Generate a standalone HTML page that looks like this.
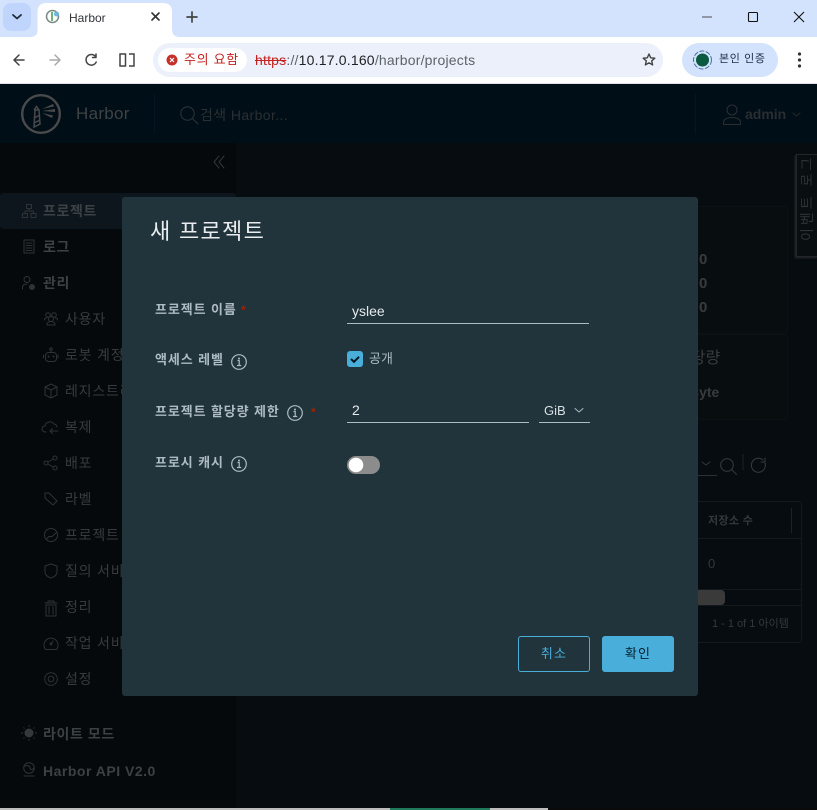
<!DOCTYPE html>
<html lang="ko"><head><meta charset="utf-8"><title>Harbor</title>
<style>
html,body{margin:0;padding:0;width:817px;height:810px;overflow:hidden;background:#fff}
body{position:relative;font-family:"Liberation Sans","Noto Sans CJK KR",sans-serif}
.a{position:absolute;white-space:nowrap}
svg{position:absolute;overflow:visible}
.s{fill:none;stroke-linecap:round;stroke-linejoin:round}
.nav{color:#363b3e;font-size:14px;line-height:20px;letter-spacing:.8px;margin-top:1px}
.navb{font-weight:bold;color:#3c4144;letter-spacing:.6px}
.lab{color:#adbbc4;font-size:13px;font-weight:bold;line-height:18px;letter-spacing:.9px}
.line{position:absolute;height:1px;background:#adbbc4}
.ic{stroke:#2e3336;stroke-width:1}
</style></head><body>
<!-- browser chrome -->
<div class="a" style="left:0;top:0;width:817px;height:37px;background:#d3e3fd"></div>
<div class="a" style="left:0;top:37px;width:817px;height:46px;background:#fff"></div>
<div class="a" style="left:3px;top:3px;width:28px;height:28px;border-radius:8px;background:#bfd5fb"></div>
<div class="a" style="left:153px;top:43px;width:510px;height:34px;border-radius:17px;background:#ebf0fa"></div>
<div class="a" style="left:158px;top:48px;width:89px;height:24px;border-radius:12px;background:#fff"></div>
<div class="a" style="left:682px;top:43px;width:96px;height:34px;border-radius:17px;background:#d3e3fd"></div>
<svg style="left:0;top:0" width="817" height="84">
<path class="s" d="M13 15l4 3.500 4-3.500" stroke="#1f2937" stroke-width="1.800"/>
<path d="M30 37C36 37 37.500 34 37.500 30V12Q37.500 3 46.500 3H163Q172 3 172 12V28C172 34 174 37 180 37Z" fill="#fff"/>
<circle cx="52.500" cy="16.500" r="6" fill="none" stroke="#7a8a80" stroke-width="1.500"/>
<path d="M52 12v9" stroke="#3a9a4a" stroke-width="1.500"/><circle cx="56.500" cy="14" r="2.500" fill="#6bb6e0"/>
<path class="s" d="M152 13l7 7M159 13l-7 7" stroke="#333" stroke-width="1.600"/>
<path class="s" d="M192 12v10M187 17h10" stroke="#444" stroke-width="1.700"/>
<path d="M702 17h10" stroke="#6b6f78" stroke-width="1.300"/>
<rect x="748.500" y="12.500" width="9" height="9" rx="1" fill="none" stroke="#111" stroke-width="1.100"/>
<path d="M794 12l10 10M804 12l-10 10" stroke="#111" stroke-width="1.100"/>
<path class="s" d="M24 60H14M19 55l-5 5 5 5" stroke="#444" stroke-width="1.500" fill="none"/>
<path class="s" d="M60 60H50M55 55l5 5-5 5" stroke="#aaa" stroke-width="1.500" fill="none"/>
<path class="s" d="M95.500 56.500A5.300 5.300 0 1 0 96.200 62M96 54v3.500h-3.500" stroke="#444" stroke-width="1.500" fill="none"/>
<path d="M125.500 54h-5.500v12h5.500zM129 54h5v12h-5" fill="none" stroke="#444" stroke-width="1.500"/>
<circle cx="172" cy="60" r="5.500" fill="#c5302a"/>
<path d="M170 58l4 4M174 58l-4 4" stroke="#fff" stroke-width="1.200"/>
<path d="M649 54l1.700 3.800 4.100.4-3.100 2.700.9 4-3.600-2.100-3.600 2.100.9-4-3.100-2.700 4.100-.4z" fill="none" stroke="#444" stroke-width="1.400" stroke-linejoin="round"/>
<circle cx="799.500" cy="54" r="1.600" fill="#333"/><circle cx="799.500" cy="60" r="1.600" fill="#333"/><circle cx="799.500" cy="66" r="1.600" fill="#333"/>
<circle cx="702.500" cy="60" r="9" fill="none" stroke="#4a6fa5" stroke-width="1" stroke-dasharray="5 1.500"/><circle cx="702.500" cy="60" r="6.500" fill="#0a5a42"/>
</svg>
<div class="a" style="left:69px;top:10px;font-size:12px;line-height:17px;color:#303338">Harbor</div>
<div class="a" style="left:184px;top:51px;font-size:13px;line-height:17px;letter-spacing:.7px;color:#c5221f">주의 요함</div>
<div class="a" style="left:255px;top:51px;font-size:14px;line-height:18px;letter-spacing:.2px;color:#5f6368"><span style="color:#c5221f;text-decoration:line-through">https</span>://<span style="color:#202124">10.17.0.160</span>/harbor/projects</div>
<div class="a" style="left:719px;top:51px;font-size:11px;line-height:17px;letter-spacing:.6px;color:#1f2a44">본인 인증</div>
<div class="a" style="left:0;top:83px;width:817px;height:1px;background:#dfe1e5"></div>
<!-- app -->
<div class="a" style="left:0;top:84px;width:817px;height:726px;background:#070c10"></div>
<div class="a" style="left:0;top:84px;width:817px;height:59px;background:#000e17"></div>
<div class="a" style="left:0;top:143px;width:236px;height:665px;background:#05090c"></div>
<div class="a" style="left:0;top:193px;width:236px;height:36px;border-radius:3px;background:#0d161c"></div>
<div class="a" style="left:154px;top:94px;width:1px;height:40px;background:#061620"></div>
<div class="a" style="left:695px;top:94px;width:1px;height:40px;background:#061620"></div>
<svg style="left:0;top:0" width="817" height="810">
<circle cx="41" cy="114" r="18.800" fill="none" stroke="#4a4a4a" stroke-width="2.400"/>
<path d="M34 127l1-17h4l1 14zM34 110l2.500-3.500 2.500 3.500" fill="none" stroke="#4a4a4a" stroke-width="1.500"/>
<path d="M34 118l6-3M34 123l6-3" stroke="#4a4a4a" stroke-width="1.500"/>
<path d="M42 109l11-5 1 2.500zM42 111l13 1v-3zM42 113l10 5 1-2.500z" fill="#4a4a4a"/>
<g class="s" stroke="#2c3236" stroke-width="1.100"><circle cx="187.500" cy="113.500" r="6.700"/><path d="M192.500 118.500l5.500 5.500"/></g>
<g class="s" stroke="#2a2e31" stroke-width="1.100"><circle cx="732" cy="110" r="5"/><path d="M723.500 124.500v-2c0-3 3-5 8.500-5s8.500 2 8.500 5v2z"/></g>
<path class="s" d="M793 113l3.500 3 3.500-3" stroke="#26292b" stroke-width="1"/>
<path class="s" d="M219 156l-5 6 5 6M224 156l-5 6 5 6" stroke="#2f373b" stroke-width="1"/>
<!-- nav icons -->
<g class="s ic">
<rect x="26.500" y="204.500" width="5" height="4"/><rect x="22.500" y="213.500" width="5" height="4"/><rect x="31" y="213.500" width="5" height="4"/><path d="M29 208.500v2.500M25 213.500v-2.500h8.500v2.500"/>
<rect x="24" y="240" width="10" height="13"/><path d="M26 243h6M26 245.500h6M26 248h6M26 250.500h6"/>
<circle cx="27" cy="279.500" r="3"/><path d="M22.500 289v-1.500c0-2.500 2-3.500 4.500-3.500"/><circle cx="32" cy="287" r="2.500" fill="#2e3336"/>
<circle cx="48" cy="315" r="2.300"/><circle cx="54" cy="315" r="2.300"/><circle cx="51" cy="319" r="2.500"/><path d="M47 325v-1c0-1.500 2-2.500 4-2.500s4 1 4 2.500v1zM44.500 320c0-1.500 1-2 2-2M57.500 320c0-1.500-1-2-2-2"/>
<rect x="45.500" y="352.500" width="11" height="9" rx="3"/><circle cx="51" cy="349" r="1.200"/><path d="M51 350v2.500M43.500 355v3M58 355v3"/><circle cx="48.500" cy="356.500" r=".5"/><circle cx="53.500" cy="356.500" r=".5"/>
<path d="M51 384l6 3v8l-6 3-6-3v-8zM45 387l6 3 6-3M51 390v8"/>
<path d="M46 432h-1a3 3 0 0 1 0-6a5 5 0 0 1 9-2a3.500 3.500 0 0 1 3 3M50 431h8M52.500 428.500l-2.500 2.500 2.500 2.500"/>
<circle cx="46" cy="463" r="2"/><circle cx="55" cy="458" r="2"/><circle cx="55" cy="468" r="2"/><path d="M48 462l5-3M48 464l5 3"/>
<path d="M45 494v4l8 7 4-4-8-8h-4z"/>
<circle cx="51" cy="535" r="6.500"/><path d="M46.500 539l2.500-2.500h3l4.500-4"/>
<path d="M51 564l6 2v6c0 3-3 5-6 6-3-1-6-3-6-6v-6z"/>
<path d="M45 603h12M48 603v-2h6v2M46 605h10v11h-10zM49 607v7M53 607v7"/>
<path d="M45.500 649.500a7 7 0 1 1 11 0zM51 644l2-3"/><circle cx="51" cy="644" r=".8"/>
<circle cx="51" cy="679" r="2.800"/><circle cx="51" cy="679" r="6.300" stroke-dasharray="2.500 1"/>
<circle cx="29" cy="768" r="5.300"/><path d="M24 776h10M25 766c3-1 5 0 5 2s3 2 4 0"/>
</g>
<circle cx="29" cy="733" r="4.500" fill="#34383b"/>
<g stroke="#2e3235" stroke-width="1"><path d="M29 727v-2M29 741v-2M23 733h-2M37 733h-2M24.500 728.500l-1-1M34.500 738.500l-1-1M33.500 728.500l1-1M23.500 738.500l1-1"/></g>
<!-- background right items -->
<path class="s" d="M702 462l4 3 4-3" stroke="#33383b"/>
<g class="s" stroke="#33383b" stroke-width="1.100"><circle cx="727" cy="465" r="6.300"/><path d="M732 470l4.500 4.500"/>
<path d="M765 463a7 7 0 1 1-2-3M765 458v4h-4"/></g>
<path d="M743 454v16" stroke="#1d2225"/>
</svg>
<div class="a" style="left:76px;top:104px;font-size:17px;line-height:20px;color:#3f4245;letter-spacing:.3px">Harbor</div>
<div class="a" style="left:200px;top:106px;font-size:14px;line-height:19px;letter-spacing:.4px;color:#2a2f32">검색 Harbor...</div>
<div class="a" style="left:745px;top:105px;font-size:14px;line-height:19px;font-weight:bold;color:#2a2e31">admin</div>
<div class="a nav navb" style="left:43px;top:200px">프로젝트</div>
<div class="a nav navb" style="left:43px;top:236px">로그</div>
<div class="a nav navb" style="left:43px;top:272px">관리</div>
<div class="a nav" style="left:65px;top:308px">사용자</div>
<div class="a nav" style="left:65px;top:344px">로봇 계정</div>
<div class="a nav" style="left:65px;top:380px">레지스트리</div>
<div class="a nav" style="left:65px;top:416px">복제</div>
<div class="a nav" style="left:65px;top:452px">배포</div>
<div class="a nav" style="left:65px;top:488px">라벨</div>
<div class="a nav" style="left:65px;top:524px">프로젝트 할당량</div>
<div class="a nav" style="left:65px;top:560px">질의 서비스</div>
<div class="a nav" style="left:65px;top:596px">정리</div>
<div class="a nav" style="left:65px;top:632px">작업 서비스</div>
<div class="a nav" style="left:65px;top:668px">설정</div>
<div class="a nav navb" style="left:43px;top:723px">라이트 모드</div>
<div class="a nav navb" style="left:43px;top:760px;font-size:14px;letter-spacing:.5px">Harbor API V2.0</div>
<!-- right background -->
<div class="a" style="left:600px;top:206px;width:186px;height:126px;border:1px solid #0c1113;border-radius:3px;background:#080d10"></div>
<div class="a" style="left:600px;top:334px;width:186px;height:84px;border:1px solid #0c1113;border-radius:3px;background:#080d10"></div>
<div class="a" style="left:699px;top:250px;font-size:15px;line-height:20px;color:#383c3f;font-weight:bold">0</div>
<div class="a" style="left:699px;top:274px;font-size:15px;line-height:20px;color:#383c3f;font-weight:bold">0</div>
<div class="a" style="left:699px;top:298px;font-size:15px;line-height:20px;color:#383c3f;font-weight:bold">0</div>
<div class="a" style="left:676px;top:348px;font-size:16px;line-height:22px;color:#383c3f">할당량</div>
<div class="a" style="left:689px;top:383px;font-size:14px;line-height:18px;color:#383c3f;font-weight:bold">Byte</div>
<div class="a" style="left:796px;top:154px;width:21px;height:101px;border:1px solid #222629;border-right:0;background:#090e11;box-shadow:-1px 1px 2px #2a2d2f"></div>
<div class="a" style="left:771px;top:195px;width:72px;height:20px;line-height:20px;text-align:center;transform:rotate(-90deg);font-size:14px;letter-spacing:3px;color:#2e3234">이벤트 로그</div>
<div class="a" style="left:600px;top:475px;width:117px;height:1px;background:#2d3134"></div>
<div class="a" style="left:600px;top:501px;width:200px;height:140px;border:1px solid #14191c;border-radius:3px"></div>
<div class="a" style="left:600px;top:538px;width:201px;height:1px;background:#14191c"></div>
<div class="a" style="left:600px;top:589px;width:201px;height:1px;background:#14191c"></div>
<div class="a" style="left:600px;top:605px;width:201px;height:1px;background:#14191c"></div>
<div class="a" style="left:791px;top:508px;width:1px;height:25px;background:#1d2225"></div>
<div class="a" style="left:600px;top:590px;width:125px;height:15px;border-radius:4px;background:#3a3a3a"></div>
<div class="a" style="left:708px;top:513px;font-size:11px;line-height:16px;font-weight:bold;letter-spacing:.3px;color:#33383b">저장소 수</div>
<div class="a" style="left:708px;top:555px;font-size:13px;line-height:18px;color:#33383b">0</div>
<div class="a" style="left:712px;top:616px;font-size:11px;line-height:16px;color:#33383b">1 - 1 of 1 아이템</div>
<!-- bottom strip -->
<div class="a" style="left:0;top:808px;width:548px;height:2px;background:#bdbdbd"></div>
<div class="a" style="left:390px;top:808px;width:100px;height:2px;background:#1e7a5a"></div>
<div class="a" style="left:548px;top:808px;width:269px;height:2px;background:#0a0a0a"></div>
<!-- modal -->
<div class="a" style="left:122px;top:197px;width:576px;height:499px;border-radius:3px;background:#21333b"></div>
<div class="a" style="left:150px;top:217px;font-size:22px;line-height:30px;letter-spacing:1.300px;color:#eaedf0">새 프로젝트</div>
<div class="a lab" style="left:155px;top:301px">프로젝트 이름</div>
<div class="a" style="left:241px;top:301px;font-size:12px;line-height:18px;color:#a32100;font-weight:bold">*</div>
<div class="a lab" style="left:155px;top:351px">액세스 레벨</div>
<div class="a lab" style="left:155px;top:403px">프로젝트 할당량 제한</div>
<div class="a lab" style="left:155px;top:454px">프로시 캐시</div>
<div class="a" style="left:311px;top:403px;font-size:12px;line-height:18px;color:#a32100;font-weight:bold">*</div>
<svg style="left:0;top:0" width="817" height="810">
<g fill="none" stroke="#adbbc4" stroke-width="1.200">
<circle cx="239" cy="362" r="7.300"/><circle cx="295" cy="413" r="7.300"/><circle cx="239" cy="464" r="7.300"/>
<path d="M237.500 360.500h1.700v5M237 365.500h4.200M293.500 411.500h1.700v5M293 416.500h4.200M237.500 462.500h1.700v5M237 467.500h4.200"/>
</g>
<g fill="#adbbc4"><circle cx="239" cy="358.500" r="1"/><circle cx="295" cy="409.500" r="1"/><circle cx="239" cy="460.500" r="1"/></g>
<rect x="347" y="351" width="16" height="16" rx="3" fill="#49aeda"/>
<path d="M351 359l3 2.800 5-5" fill="none" stroke="#05161f" stroke-width="2"/>
<rect x="347" y="456" width="33" height="18" rx="9" fill="#8c8c8c"/>
<circle cx="356" cy="465" r="7.300" fill="#fff"/>
<path class="s" d="M575 408.500l4 3.500 4-3.500" stroke="#adbbc4" stroke-width="1"/>
</svg>
<div class="a" style="left:352px;top:302px;font-size:14px;line-height:18px;color:#e4e9ec">yslee</div>
<div class="line" style="left:347px;top:323px;width:242px"></div>
<div class="a" style="left:369px;top:350px;font-size:13px;line-height:18px;color:#adbbc4">공개</div>
<div class="a" style="left:352px;top:401px;font-size:14px;line-height:18px;color:#e4e9ec">2</div>
<div class="line" style="left:347px;top:422px;width:182px"></div>
<div class="a" style="left:544px;top:402px;font-size:13px;line-height:18px;color:#d8dfe3">GiB</div>
<div class="line" style="left:539px;top:422px;width:51px"></div>
<div class="a" style="left:518px;top:636px;width:70px;height:34px;border:1px solid #49aeda;border-radius:3px;line-height:34px;text-align:center;font-size:13px;letter-spacing:1.200px;color:#49aeda">취소</div>
<div class="a" style="left:602px;top:636px;width:72px;height:36px;border-radius:3px;background:#49aeda;line-height:36px;text-align:center;font-size:13px;letter-spacing:1.200px;color:#07202c">확인</div>
</body></html>
